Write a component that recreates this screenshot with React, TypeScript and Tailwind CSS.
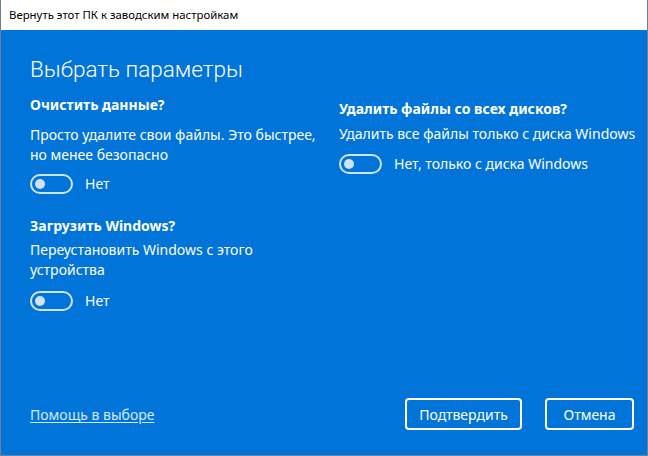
const font = { fontFamily: '"Noto Sans", "Open Sans", sans-serif' };

function Toggle({ label }: { label: string }) {
  return (
    <div className="flex items-center gap-[12px]">
      <div className="flex h-[20px] w-[43px] items-center rounded-full border-2 border-[#cfe4f8] px-[3px]">
        <div className="h-[10px] w-[10px] rounded-full bg-[#cfe4f8]" />
      </div>
      <span className="whitespace-nowrap text-[14px] text-white">{label}</span>
    </div>
  );
}

type OptionProps = {
  title: string;
  desc: React.ReactNode;
  value: string;
  descGap: string;
  toggleGap: string;
};

function Option({ title, desc, value, descGap, toggleGap }: OptionProps) {
  return (
    <div>
      <p className="whitespace-nowrap text-[14px] font-bold leading-[20px] text-white">{title}</p>
      <p className={`whitespace-nowrap text-[14px] leading-[20px] text-white ${descGap}`}>{desc}</p>
      <div className={toggleGap}>
        <Toggle label={value} />
      </div>
    </div>
  );
}

export default function App() {
  return (
    <div className="flex h-[456px] w-[648px] flex-col border border-t-0 border-[#6f7f94] bg-[#0074d9]" style={font}>
      <div className="flex h-[30px] items-center bg-white pl-[8px] text-[11.4px] text-black">
        Вернуть этот ПК к заводским настройкам
      </div>

      <div className="flex flex-1 flex-col px-[29px]">
        <h1
          className="mt-[23px] text-[22.5px] font-light leading-[32px] text-white"
          style={{ fontFamily: 'Roboto, "Noto Sans", sans-serif' }}
        >
          Выбрать параметры
        </h1>

        <div className="mt-[10px] flex">
          <div className="flex w-[309px] shrink-0 flex-col gap-[22px]">
            <Option
              title="Очистить данные?"
              desc={<>Просто удалите свои файлы. Это быстрее,<br />но менее безопасно</>}
              value="Нет"
              descGap="mt-[10px]"
              toggleGap="mt-[8px]"
            />
            <Option
              title="Загрузить Windows?"
              desc={<>Переустановить Windows с этого<br />устройства</>}
              value="Нет"
              descGap="mt-[4px]"
              toggleGap="mt-[10px]"
            />
          </div>
          <div className="mt-[4px]">
            <Option
              title="Удалить файлы со всех дисков?"
              desc="Удалить все файлы только с диска Windows"
              value="Нет, только с диска Windows"
              descGap="mt-[5px]"
              toggleGap="mt-[9px]"
            />
          </div>
        </div>

        <div className="mt-auto mb-[25px] flex items-center">
          <a className="text-[14px] text-[#d6eaff] underline underline-offset-2">Помощь в выборе</a>
          <div className="-mr-[16px] ml-auto flex gap-[23px]">
            <button className="h-[32px] w-[117px] rounded-[4px] border-2 border-white text-[14px] text-white">
              Подтвердить
            </button>
            <button className="h-[32px] w-[89px] rounded-[4px] border-2 border-white text-[14px] text-white">
              Отмена
            </button>
          </div>
        </div>
      </div>
    </div>
  );
}
